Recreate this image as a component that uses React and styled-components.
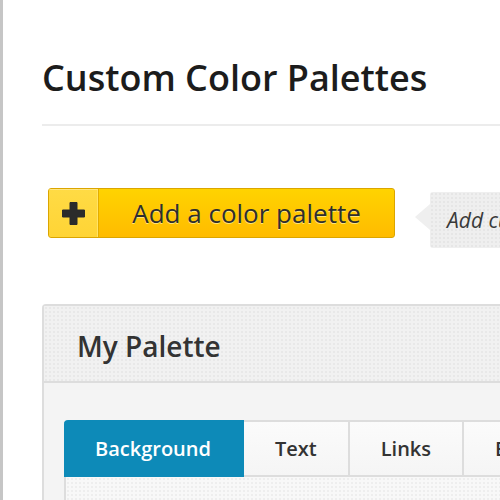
import styled, { createGlobalStyle } from "styled-components";

const GlobalStyle = createGlobalStyle`
  html, body {
    margin: 0;
    padding: 0;
    background: #ffffff;
    overflow: hidden;
  }
  body {
    font-family: "Open Sans", "Liberation Sans", sans-serif;
    color: #222;
  }
`;

const dots = `
  background-image: radial-gradient(rgba(0, 0, 0, 0.04) 0.7px, transparent 0.9px);
  background-size: 4px 4px;
`;

const Page = styled.div`
  border-left: 3px solid #c6c6c6;
  padding: 54px 0 0 39px;
  min-height: 500px;
  width: 760px;
  box-sizing: border-box;
`;

const Title = styled.h1`
  margin: 0;
  font-size: 36px;
  line-height: 48px;
  font-weight: 600;
  color: #1c1c1c;
`;

const Divider = styled.hr`
  margin: 22px 0 0;
  border: 0;
  height: 2px;
  background: #ececec;
`;

const ActionRow = styled.div`
  display: flex;
  align-items: flex-start;
  gap: 35px;
  margin: 62px 0 0 6px;
`;

const AddButton = styled.button`
  flex-shrink: 0;
  display: flex;
  align-items: stretch;
  width: 347px;
  height: 50px;
  padding: 0;
  border: 1px solid #dba500;
  border-radius: 3px;
  background: linear-gradient(#ffd300, #ffbb00);
  font-family: inherit;
  cursor: pointer;
  box-sizing: border-box;
  overflow: hidden;
`;

const IconCell = styled.span`
  width: 49px;
  display: flex;
  align-items: center;
  justify-content: center;
  background: linear-gradient(#ffdb45, #ffd435);
  border-right: 1px solid #e3ad00;
  box-shadow: inset 0 1px 0 #ffe680, inset -1px 0 0 #ffe36a;
`;

const ButtonLabel = styled.span`
  flex: 1;
  display: flex;
  align-items: center;
  justify-content: center;
  font-size: 26px;
  color: #2e2e2e;
  white-space: nowrap;
  text-shadow: 0 1px 0 #ffe57a;
  padding-bottom: 1px;
`;

const Hint = styled.div`
  flex-shrink: 0;
  position: relative;
  margin-top: 4px;
  height: 56px;
  padding: 0 24px 0 17px;
  display: flex;
  align-items: center;
  background-color: #efefef;
  ${dots}
  border-radius: 3px;
  font-size: 21px;
  font-style: italic;
  color: #3a3a3a;
  white-space: nowrap;

  &::before {
    content: "";
    position: absolute;
    left: -15px;
    top: 12px;
    border-style: solid;
    border-width: 13px 15px 13px 0;
    border-color: transparent #efefef transparent transparent;
  }
`;

const Panel = styled.section`
  margin-top: 56px;
  border: 2px solid #dddddd;
  border-right: 0;
  border-radius: 4px 0 0 0;
  background: #f4f4f4;
`;

const PanelHeader = styled.header`
  height: 77px;
  display: flex;
  align-items: center;
  padding: 4px 33px 0;
  box-sizing: border-box;
  background-color: #f1f1f1;
  ${dots}
  border-bottom: 2px solid #dddddd;
`;

const PanelTitle = styled.h2`
  margin: 0;
  font-size: 28px;
  font-weight: 600;
  color: #333;
`;

const PanelBody = styled.div`
  padding: 37px 0 0 20px;
`;

const Tabs = styled.div`
  display: flex;
  border-bottom: 2px solid #dddddd;
`;

const Tab = styled.div`
  height: 53px;
  padding: 0 31px;
  display: flex;
  align-items: center;
  font-size: 20px;
  font-weight: 600;
  white-space: nowrap;
  color: ${p => (p.$active ? "#ffffff" : "#333333")};
  background: ${p => (p.$active ? "#0d8ab8" : "linear-gradient(#fbfbfb, #f5f5f5)")};
  border-top: 2px solid ${p => (p.$active ? "#0d8ab8" : "#dddddd")};
  border-right: 2px solid ${p => (p.$active ? "#0d8ab8" : "#dddddd")};
  border-radius: ${p => (p.$first ? "4px 0 0 0" : "0")};
  margin-bottom: ${p => (p.$active ? "-2px" : "0")};
  padding-bottom: ${p => (p.$active ? "2px" : "0")};
`;

const TabContent = styled.div`
  height: 80px;
  border-left: 2px solid #dddddd;
  background-color: #f8f8f8;
  ${dots}
`;

const PlusIcon = () => (
  <svg width="25" height="25" viewBox="0 0 25 25" aria-hidden="true">
    <path
      d="M9 1.5h7v7.5h7.5v7H16v7.5H9V16H1.5V9H9z"
      fill="#2b2b2b"
      stroke="#2b2b2b"
      strokeWidth="1"
      strokeLinejoin="round"
    />
  </svg>
);

export default function App() {
  return (
    <>
      <GlobalStyle />
      <Page>
        <Title>Custom Color Palettes</Title>
        <Divider />
        <ActionRow>
          <AddButton>
            <IconCell>
              <PlusIcon />
            </IconCell>
            <ButtonLabel>Add a color palette</ButtonLabel>
          </AddButton>
          <Hint>Add custom colors to use across your site</Hint>
        </ActionRow>
        <Panel>
          <PanelHeader>
            <PanelTitle>My Palette</PanelTitle>
          </PanelHeader>
          <PanelBody>
            <Tabs>
              <Tab $active $first>Background</Tab>
              <Tab>Text</Tab>
              <Tab>Links</Tab>
              <Tab>Borders</Tab>
            </Tabs>
            <TabContent />
          </PanelBody>
        </Panel>
      </Page>
    </>
  );
}
